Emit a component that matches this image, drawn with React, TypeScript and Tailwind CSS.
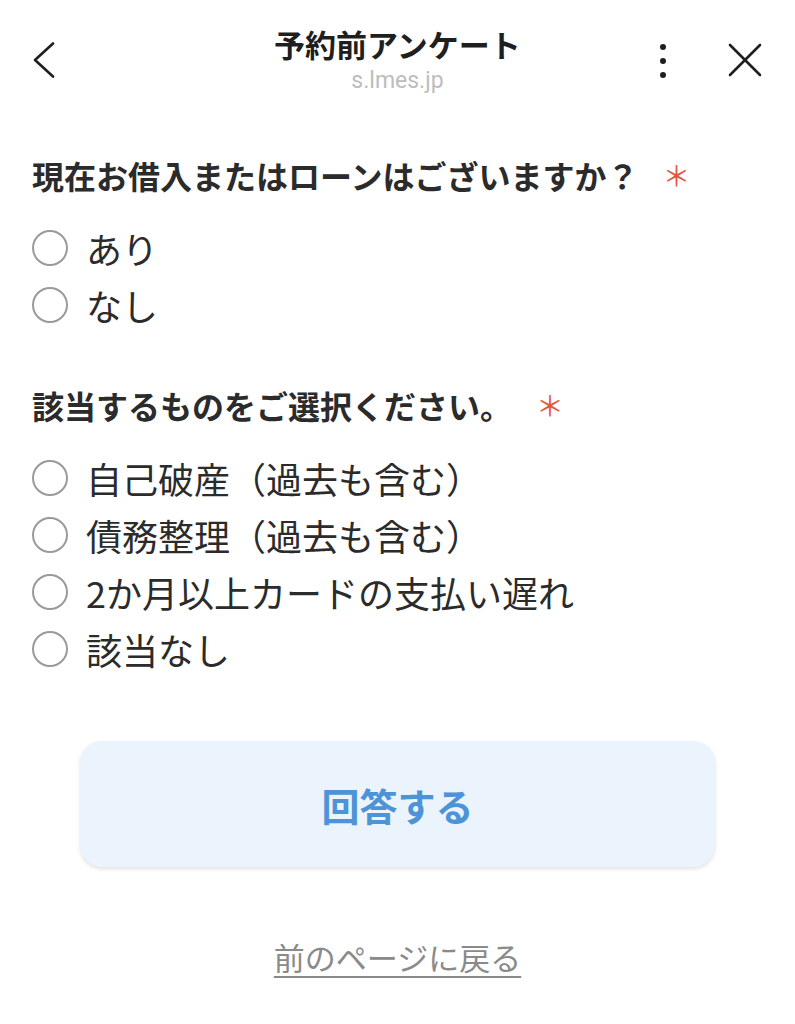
import { useState } from 'react';

const questions = [
  {
    title: '現在お借入またはローンはございますか？',
    options: ['あり', 'なし'],
  },
  {
    title: '該当するものをご選択ください。',
    options: ['自己破産（過去も含む）', '債務整理（過去も含む）', '2か月以上カードの支払い遅れ', '該当なし'],
  },
];

function Radio({ checked }: { checked: boolean }) {
  return (
    <span className="w-[36px] h-[36px] rounded-full border-[2.5px] border-[#9a9a9a] flex items-center justify-center shrink-0">
      {checked && <span className="w-[18px] h-[18px] rounded-full bg-[#4a8fd6]" />}
    </span>
  );
}

export default function App() {
  const [answers, setAnswers] = useState<Record<number, string>>({});

  return (
    <div className="min-h-screen bg-white text-[#2b2b2b] font-['Noto_Sans_CJK_JP',sans-serif]">
      {/* Header */}
      <div className="grid grid-cols-[1fr_auto_1fr] items-start h-[110px] pt-[24px]">
        <div className="pl-[32px] pt-[18px]">
          <svg width="24" height="36" viewBox="0 0 24 36" fill="none">
            <polyline points="21,1.5 3,18 21,34.5" stroke="#1f1f1f" strokeWidth="2.6" strokeLinecap="round" strokeLinejoin="round" />
          </svg>
        </div>
        <div className="flex flex-col items-center">
          <h1 className="text-[31px] leading-[40px] font-bold text-[#1f1f1f]">予約前アンケート</h1>
          <p className="text-[23px] leading-[28px] text-[#bdbdbd] font-['Roboto',sans-serif] mt-[3px]">s.lmes.jp</p>
        </div>
        <div className="flex justify-end items-start pr-[33px] pt-[19px] gap-[62px]">
          <div className="flex flex-col gap-[8px] pt-[1px]">
            <span className="w-[6px] h-[6px] rounded-full bg-[#1f1f1f]" />
            <span className="w-[6px] h-[6px] rounded-full bg-[#1f1f1f]" />
            <span className="w-[6px] h-[6px] rounded-full bg-[#1f1f1f]" />
          </div>
          <svg width="34" height="34" viewBox="0 0 34 34" fill="none">
            <line x1="2" y1="2" x2="32" y2="32" stroke="#1f1f1f" strokeWidth="2.6" strokeLinecap="round" />
            <line x1="32" y1="2" x2="2" y2="32" stroke="#1f1f1f" strokeWidth="2.6" strokeLinecap="round" />
          </svg>
        </div>
      </div>

      {/* Questions */}
      <div className="px-[32px] pt-[45px] flex flex-col gap-[52px]">
        {questions.map((q, qi) => (
          <div key={qi}>
            <div className="flex items-center h-[40px]">
              <span className="text-[32px] leading-[40px] font-bold text-[#2b2b2b]">{q.title}</span>
              <span className="ml-[24px] text-[28px] leading-[40px] text-[#e4573f]">＊</span>
            </div>
            <div className="mt-[24px] flex flex-col">
              {q.options.map((opt) => (
                <label
                  key={opt}
                  className="flex items-center h-[57px] gap-[18px] cursor-pointer"
                  onClick={() => setAnswers({ ...answers, [qi]: opt })}
                >
                  <Radio checked={answers[qi] === opt} />
                  <span className="text-[36px] leading-[40px] text-[#2b2b2b]">{opt}</span>
                </label>
              ))}
            </div>
          </div>
        ))}
      </div>

      {/* Submit */}
      <div className="px-[80px] pt-[64px]">
        <button className="w-full h-[126px] rounded-[22px] bg-[#ebf4fc] shadow-[0_2px_4px_rgba(0,0,0,0.12)] text-[38px] font-bold text-[#4d93d8]">
          回答する
        </button>
      </div>

      <div className="flex justify-center pt-[70px]">
        <a className="text-[31px] leading-[40px] text-[#8a8a8a] underline underline-offset-[6px] decoration-[2px]">前のページに戻る</a>
      </div>
    </div>
  );
}
